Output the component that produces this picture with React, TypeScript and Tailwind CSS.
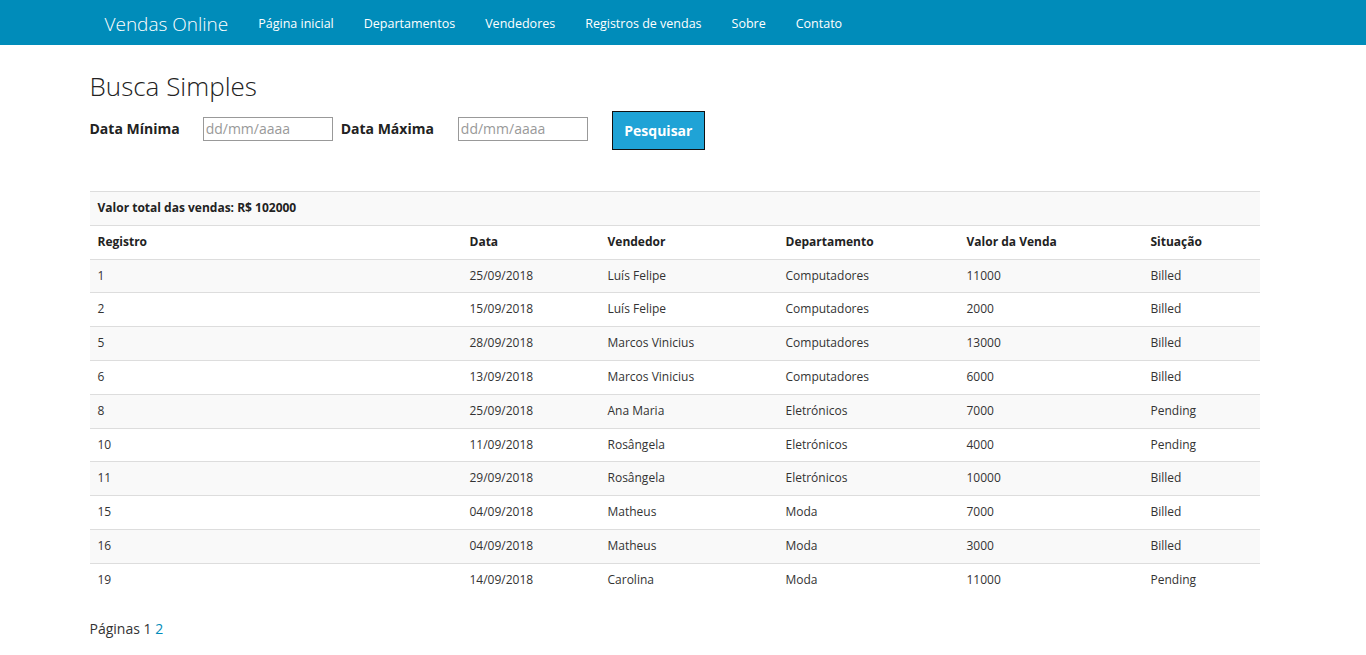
const links = ['Página inicial', 'Departamentos', 'Vendedores', 'Registros de vendas', 'Sobre', 'Contato']

const rows = [
  ['1', '25/09/2018', 'Luís Felipe', 'Computadores', '11000', 'Billed'],
  ['2', '15/09/2018', 'Luís Felipe', 'Computadores', '2000', 'Billed'],
  ['5', '28/09/2018', 'Marcos Vinicius', 'Computadores', '13000', 'Billed'],
  ['6', '13/09/2018', 'Marcos Vinicius', 'Computadores', '6000', 'Billed'],
  ['8', '25/09/2018', 'Ana Maria', 'Eletrónicos', '7000', 'Pending'],
  ['10', '11/09/2018', 'Rosângela', 'Eletrónicos', '4000', 'Pending'],
  ['11', '29/09/2018', 'Rosângela', 'Eletrónicos', '10000', 'Billed'],
  ['15', '04/09/2018', 'Matheus', 'Moda', '7000', 'Billed'],
  ['16', '04/09/2018', 'Matheus', 'Moda', '3000', 'Billed'],
  ['19', '14/09/2018', 'Carolina', 'Moda', '11000', 'Pending'],
]

const cols = ['Registro', 'Data', 'Vendedor', 'Departamento', 'Valor da Venda', 'Situação']
const widths = ['w-[372px]', 'w-[138px]', 'w-[178px]', 'w-[181px]', 'w-[184px]', 'w-[117px]']

export default function App() {
  return (
    <div className="min-h-[760px] bg-white pr-[17px] text-[#222] font-['Open_Sans',sans-serif]">
      {/* Navbar */}
      <nav className="-mr-[17px] h-[45px] bg-[#008cba] pr-[17px]">
        <div className="mx-auto flex h-full w-[1170px] items-center px-[15px] pt-[3px]">
          <span className="mr-[15px] text-[19px] font-light text-white">Vendas Online</span>
          {links.map((l) => (
            <a key={l} className="px-[15px] text-[12.5px] text-white">
              {l}
            </a>
          ))}
        </div>
      </nav>

      <div className="mx-auto w-[1170px]">
        <h2 className="mt-[25px] text-[26px] leading-[33px] font-light text-[#222]">Busca Simples</h2>

        {/* Search form */}
        <div className="mt-[4px] flex items-center">
          <label className="text-[14px] font-bold">Data Mínima</label>
          <input
            placeholder="dd/mm/aaaa"
            className="ml-[23px] h-[24px] w-[130px] border border-[#999] px-[2px] text-[14px] text-[#222] placeholder:text-[#999]"
          />
          <label className="ml-[8px] text-[14px] font-bold">Data Máxima</label>
          <input
            placeholder="dd/mm/aaaa"
            className="ml-[24px] h-[24px] w-[130px] border border-[#999] px-[2px] text-[14px] text-[#222] placeholder:text-[#999]"
          />
          <button className="ml-[24px] mt-[4px] h-[39px] w-[93px] border border-[#111] bg-[#1fa3d6] text-[14px] font-bold text-white">
            Pesquisar
          </button>
        </div>

        {/* Table */}
        <table className="mt-[41px] w-full table-fixed border-collapse text-[12px] leading-[16.8px]">
          <colgroup>
            {widths.map((w) => (
              <col key={w} className={w} />
            ))}
          </colgroup>
          <thead>
            <tr className="border-t border-[#ddd] bg-[#f9f9f9]">
              <th colSpan={6} className="px-[8px] py-[8px] text-left font-bold">
                Valor total das vendas: R$ 102000
              </th>
            </tr>
            <tr className="border-t border-[#ddd]">
              {cols.map((c) => (
                <th key={c} className="px-[8px] py-[8px] text-left font-bold">
                  {c}
                </th>
              ))}
            </tr>
          </thead>
          <tbody>
            {rows.map((r, i) => (
              <tr key={r[0]} className={`border-t border-[#ddd] ${i % 2 === 0 ? 'bg-[#f9f9f9]' : 'bg-white'}`}>
                {r.map((c, j) => (
                  <td key={j} className="px-[8px] py-[8px] text-[#333]">
                    {c}
                  </td>
                ))}
              </tr>
            ))}
          </tbody>
        </table>

        <p className="mt-[21px] text-[14px] text-[#333]">
          Páginas 1 <a className="text-[#008cba]">2</a>
        </p>
      </div>
    </div>
  )
}
